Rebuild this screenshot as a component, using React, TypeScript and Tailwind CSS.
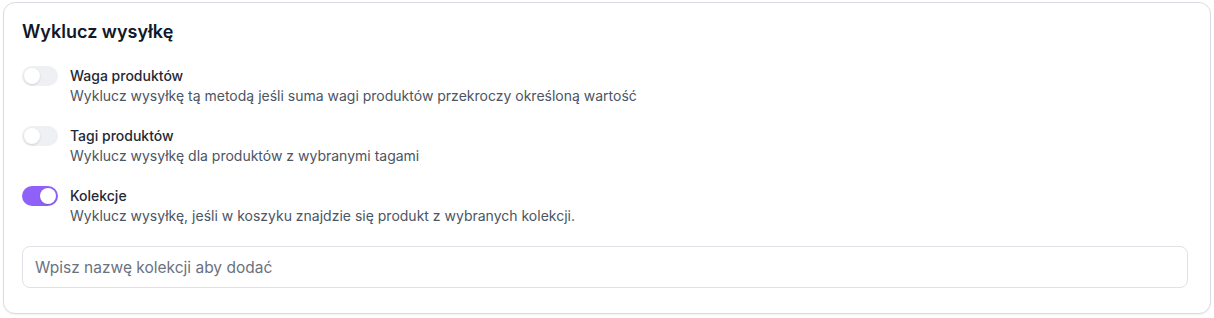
import { useState } from 'react';

type Rule = { id: string; label: string; desc: string; on: boolean };

const RULES: Rule[] = [
  { id: 'weight', label: 'Waga produktów', desc: 'Wyklucz wysyłkę tą metodą jeśli suma wagi produktów przekroczy określoną wartość', on: false },
  { id: 'tags', label: 'Tagi produktów', desc: 'Wyklucz wysyłkę dla produktów z wybranymi tagami', on: false },
  { id: 'collections', label: 'Kolekcje', desc: 'Wyklucz wysyłkę, jeśli w koszyku znajdzie się produkt z wybranych kolekcji.', on: true },
];

function Toggle({ on, onClick }: { on: boolean; onClick: () => void }) {
  return (
    <button
      onClick={onClick}
      className={`relative h-5 w-9 shrink-0 rounded-full transition-colors ${on ? 'bg-[#9061f9]' : 'bg-[#eef0f3]'}`}
    >
      <span
        className={`absolute top-[2px] h-4 w-4 rounded-full bg-white shadow-sm transition-all ${on ? 'left-[18px]' : 'left-[2px]'}`}
      />
    </button>
  );
}

export default function App() {
  const [rules, setRules] = useState(RULES);

  function flip(id: string) {
    setRules(prev => prev.map(r => (r.id === id ? { ...r, on: !r.on } : r)));
  }

  return (
    <div className="min-h-[318px] bg-white pl-[3px] pt-[2px] font-['Inter',sans-serif]">
      <div className="h-[312px] w-[1208px] rounded-xl border border-[#d9dde3] bg-white px-[18px] pt-[19px] shadow-[0_1px_2px_rgba(0,0,0,0.06)]">
        <h2 className="text-[18px] font-semibold leading-5 text-[#111827]">Wyklucz wysyłkę</h2>

        <div className="mt-[24px] flex flex-col gap-[20px]">
          {rules.map(r => (
            <div key={r.id} className="flex items-start gap-3">
              <Toggle on={r.on} onClick={() => flip(r.id)} />
              <div className="flex flex-col">
                <span className="text-[14px] font-[450] leading-5 text-[#1f2937]">{r.label}</span>
                <span className="text-[14px] leading-5 text-[#4b5563]">{r.desc}</span>
              </div>
            </div>
          ))}
        </div>

        <input
          placeholder="Wpisz nazwę kolekcji aby dodać"
          className="mt-[20px] h-[42px] w-[1166px] rounded-lg border border-[#dfe2e7] bg-white px-3 text-[15.5px] text-[#374151] placeholder:text-[#6b7280] focus:outline-none"
        />
      </div>
    </div>
  );
}
